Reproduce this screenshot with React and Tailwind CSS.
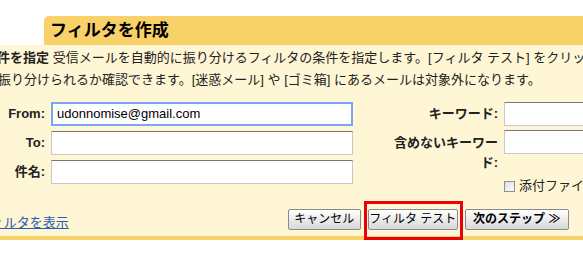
import React from 'react';

const font = "font-['Liberation_Sans','Noto_Sans_CJK_JP',sans-serif]";

function Field({ label, value, focused }) {
  return (
    <div className="flex items-center h-[29px]">
      <div className="w-[45px] text-right font-bold text-[13px] leading-[16px] text-[#222]">{label}</div>
      <input
        readOnly
        value={value || ''}
        className={
          focused
            ? 'ml-[6px] w-[302px] h-[24px] border-2 border-[#7aa7f5] bg-white px-[4px] text-[13px] text-black outline-none'
            : 'ml-[6px] w-[302px] h-[24px] border border-[#c8c8c8] border-t-[#777] bg-white px-[4px] text-[13px] outline-none'
        }
      />
    </div>
  );
}

function Btn({ children, bold, w }) {
  return (
    <button
      className={
        'shrink-0 whitespace-nowrap h-[21px] border border-[#8a8a8a] rounded-[2px] bg-gradient-to-b from-white to-[#d8d8d8] text-[12px] leading-[18px] text-black ' +
        (bold ? 'font-bold ' : '') +
        w
      }
    >
      {children}
    </button>
  );
}

export default function App() {
  return (
    <div className={`w-[583px] h-[254px] bg-white overflow-hidden relative ${font}`}>
      <div className="h-[16px]"></div>

      {/* tab header */}
      <div className="flex h-[29px]">
        <div className="w-[44px]"></div>
        <div className="flex-1 bg-[#f9d169] rounded-tl-[5px] pl-[6px] pt-[4px] font-bold text-[17px] leading-[22px] text-black">
          フィルタを作成
        </div>
      </div>

      <div className="bg-[#fff6d6] border-b-4 border-[#f9d169] h-[195px]">
        <div className="whitespace-nowrap text-[13px] leading-[22px] text-[#222] pt-[2px]">
          <div className="ml-[-16px]">
            <span className="font-bold">条件を指定</span> 受信メールを自動的に振り分けるフィルタの条件を指定します。[フィルタ テスト] をクリックして、
          </div>
          <div className="ml-[-2px]">振り分けられるか確認できます。[迷惑メール] や [ゴミ箱] にあるメールは対象外になります。</div>
        </div>

        <div className="flex mt-[8px]">
          <div className="flex flex-col">
            <Field label="From:" value="udonnomise@gmail.com" focused />
            <Field label="To:" />
            <Field label="件名:" />
          </div>

          <div className="flex flex-col ml-[36px]">
            <div className="flex items-center h-[29px]">
              <div className="w-[109px] text-right font-bold text-[13px] leading-[16px] text-[#222]">キーワード:</div>
              <input readOnly className="ml-[6px] w-[120px] h-[24px] border border-[#c8c8c8] border-t-[#777] bg-white outline-none" />
            </div>
            <div className="flex items-start h-[50px] pt-[2px]">
              <div className="w-[109px] text-right font-bold text-[13px] leading-[20px] pt-[3px] text-[#222]">
                含めないキーワード:
              </div>
              <input readOnly className="ml-[6px] w-[120px] h-[24px] border border-[#c8c8c8] border-t-[#777] bg-white outline-none" />
            </div>
            <div className="flex items-center ml-[115px] whitespace-nowrap">
              <span className="w-[11px] h-[11px] border border-[#8f8f8f] bg-gradient-to-br from-[#dcdcdc] to-white"></span>
              <span className="ml-[4px] text-[13px] leading-[16px] text-[#222]">添付ファイルあり</span>
            </div>
          </div>
        </div>

        <div className="flex items-center mt-[13px]">
          <a className="shrink-0 ml-[-22px] text-[13px] leading-[16px] text-[#2a5db0] underline whitespace-nowrap mt-[8px]">フィルタを表示</a>
          <div className="flex gap-[7px] ml-[219px]">
            <Btn w="w-[73px]">キャンセル</Btn>
            <Btn w="w-[90px]">フィルタ テスト</Btn>
            <Btn bold w="w-[104px]">次のステップ ≫</Btn>
          </div>
        </div>
      </div>

      {/* annotation box */}
      <div className="absolute left-[364px] top-[201px] w-[99px] h-[39px] border-[3px] border-[#e8000b]"></div>
    </div>
  );
}
